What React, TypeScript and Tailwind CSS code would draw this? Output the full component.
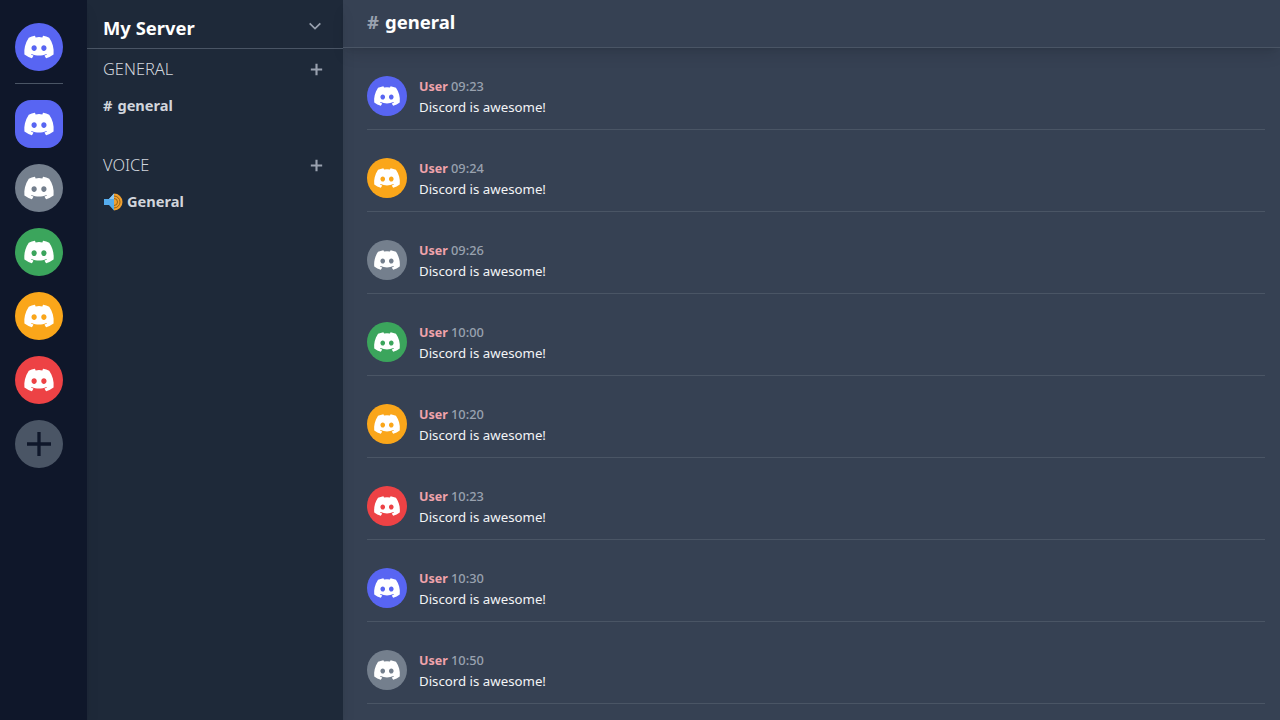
import { FaDiscord } from 'react-icons/fa'

const servers = ['bg-[#5865f2] rounded-2xl', 'bg-[#747f8d] rounded-full', 'bg-[#3ba55c] rounded-full', 'bg-[#faa61a] rounded-full', 'bg-[#ed4245] rounded-full']

const messages = [
    { id: 1, time: '09:23', color: 'bg-[#5865f2]' },
    { id: 2, time: '09:24', color: 'bg-[#faa61a]' },
    { id: 3, time: '09:26', color: 'bg-[#747f8d]' },
    { id: 4, time: '10:00', color: 'bg-[#3ba55c]' },
    { id: 5, time: '10:20', color: 'bg-[#faa61a]' },
    { id: 6, time: '10:23', color: 'bg-[#ed4245]' },
    { id: 7, time: '10:30', color: 'bg-[#5865f2]' },
    { id: 8, time: '10:50', color: 'bg-[#747f8d]' },
]

function Plus({ className, width = 3 }: { className: string; width?: number }) {
    return (
        <svg viewBox="0 0 24 24" fill="none" stroke="currentColor" strokeWidth={width} className={className}>
            <path d="M12 4v16M4 12h16" />
        </svg>
    )
}

function Speaker() {
    return (
        <svg viewBox="0 0 20 20" className="size-5 shrink-0">
            <path d="M11 1.500a8.500 8.500 0 0 1 0 17z" fill="#f0a030" />
            <path d="M11 4a6 6 0 0 1 0 12M11 6.500a3.500 3.500 0 0 1 0 7" fill="none" stroke="#8a5a14" strokeWidth={0.9} />
            <path d="M1 7h5l5-5.500v17L6 13H1z" fill="#55acee" />
            <path d="M1 7h5l5-5.500V7z" fill="#8ccaf7" />
        </svg>
    )
}

export default function App() {
    return (
        <div className="flex h-screen w-full overflow-hidden bg-gray-700 font-['Noto_Sans',sans-serif] text-white">
            <nav className="z-20 flex w-[87px] shrink-0 flex-col bg-[#0f172a] pl-[15px] pt-[23px] shadow-lg">
                <div className="flex size-12 items-center justify-center rounded-full bg-[#5865f2]">
                    <FaDiscord className="size-8" />
                </div>
                <hr className="mb-4 mt-3 w-12 border-gray-600" />
                <div className="flex flex-col gap-4">
                    {servers.map((s) => (
                        <div key={s} className={`flex size-12 items-center justify-center ${s}`}>
                            <FaDiscord className="size-8" />
                        </div>
                    ))}
                    <div className="flex size-12 items-center justify-center rounded-full bg-gray-600 text-[#0f172a]">
                        <Plus className="size-9" width={2.2} />
                    </div>
                </div>
            </nav>

            <aside className="z-10 flex w-[256px] shrink-0 flex-col bg-gray-800 shadow-lg">
                <div className="flex h-[49px] items-center justify-between border-b border-gray-600 pl-4 pr-5 pt-2">
                    <h1 className="text-[18.4px] font-bold">My Server</h1>
                    <svg viewBox="0 0 24 24" fill="none" stroke="currentColor" strokeWidth={2.5} className="mb-1 size-4 text-gray-400">
                        <path d="M4 8l8 8 8-8" />
                    </svg>
                </div>
                <div className="flex h-10 items-center justify-between pl-4 pr-[18px] text-gray-300">
                    <span className="text-[16.4px] font-light">GENERAL</span>
                    <Plus className="size-[17px] text-gray-400" />
                </div>
                <div className="flex h-8 items-center gap-[5px] pl-4 pt-0.5 text-[14.6px] font-bold text-gray-300">
                    <span>#</span>
                    <span>general</span>
                </div>
                <div className="mt-6 flex h-10 items-center justify-between pl-4 pr-[18px] text-gray-300">
                    <span className="text-[16.4px] font-light">VOICE</span>
                    <Plus className="size-[17px] text-gray-400" />
                </div>
                <div className="flex h-8 items-center gap-1 pl-4 pt-0.5 text-[14.6px] font-bold text-gray-300">
                    <Speaker />
                    General
                </div>
            </aside>

            <main className="flex min-w-0 flex-1 flex-col">
                <header className="z-10 flex h-12 shrink-0 items-center gap-[6px] border-b border-gray-600 pb-1 pl-6 shadow-lg">
                    <span className="text-[18.5px] font-bold text-gray-400">#</span>
                    <span className="text-[18.5px] font-bold">general</span>
                </header>
                <div className="flex flex-col pl-6 pr-[15px] pt-7">
                    {messages.map((m) => (
                        <article key={m.id} className="mb-7 flex h-[54px] shrink-0 gap-3 border-b border-gray-600">
                            <div className={`flex size-10 items-center justify-center rounded-full ${m.color}`}>
                                <FaDiscord className="size-7" />
                            </div>
                            <div>
                                <p className="text-[12.5px] leading-5 font-bold text-[#f0a3ab]">
                                    User <span className="text-[12.8px] font-medium text-gray-400">{m.time}</span>
                                </p>
                                <p className="text-[13.25px] leading-[21px] text-gray-100">Discord is awesome!</p>
                            </div>
                        </article>
                    ))}
                </div>
            </main>
        </div>
    )
}
